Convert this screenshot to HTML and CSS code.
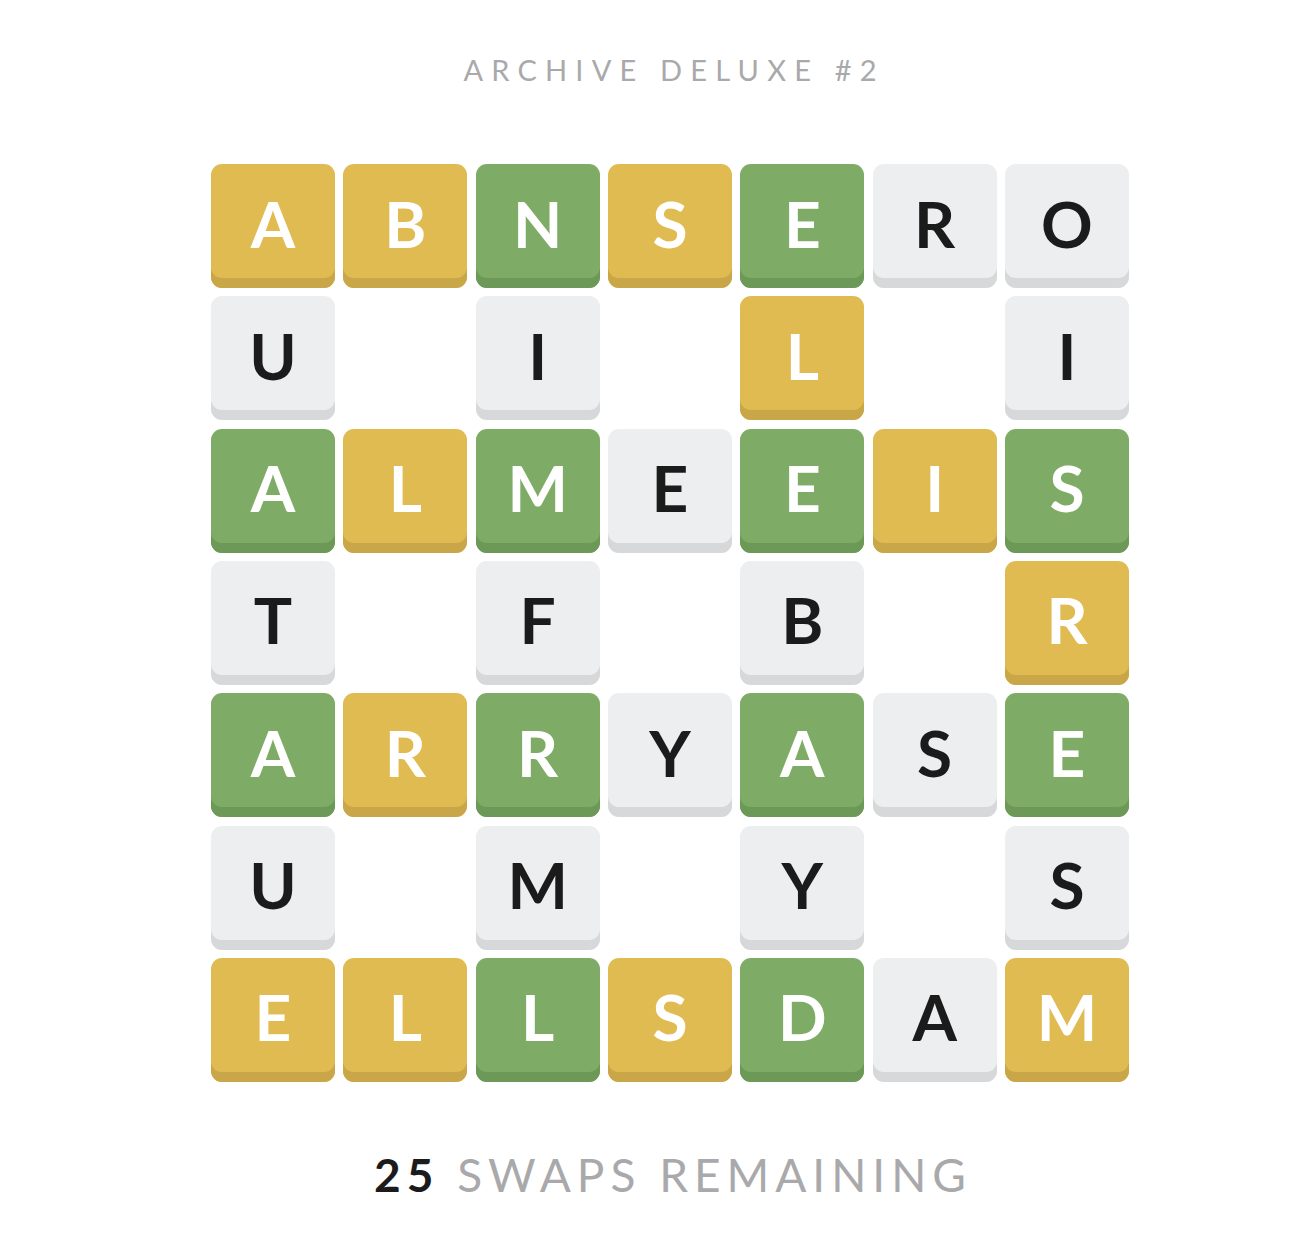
FILE: index.html
```html
<!DOCTYPE html>
<html>
<head>
<meta charset="utf-8">
<link rel="stylesheet" href="styles.css">
</head>
<body>
<main class="page">
  <h1 class="title">ARCHIVE DELUXE #2</h1>
  <div class="board">
    <div class="tile y">A</div><div class="tile y">B</div><div class="tile g">N</div><div class="tile y">S</div><div class="tile g">E</div><div class="tile w">R</div><div class="tile w">O</div>
    <div class="tile w">U</div><div class="gap"></div><div class="tile w">I</div><div class="gap"></div><div class="tile y">L</div><div class="gap"></div><div class="tile w">I</div>
    <div class="tile g">A</div><div class="tile y">L</div><div class="tile g">M</div><div class="tile w">E</div><div class="tile g">E</div><div class="tile y">I</div><div class="tile g">S</div>
    <div class="tile w">T</div><div class="gap"></div><div class="tile w">F</div><div class="gap"></div><div class="tile w">B</div><div class="gap"></div><div class="tile y">R</div>
    <div class="tile g">A</div><div class="tile y">R</div><div class="tile g">R</div><div class="tile w">Y</div><div class="tile g">A</div><div class="tile w">S</div><div class="tile g">E</div>
    <div class="tile w">U</div><div class="gap"></div><div class="tile w">M</div><div class="gap"></div><div class="tile w">Y</div><div class="gap"></div><div class="tile w">S</div>
    <div class="tile y">E</div><div class="tile y">L</div><div class="tile g">L</div><div class="tile y">S</div><div class="tile g">D</div><div class="tile w">A</div><div class="tile y">M</div>
  </div>
  <p class="swaps"><span class="count">25</span> SWAPS REMAINING</p>
</main>
</body>
</html>
```
FILE: styles.css
```css
html, body {
  margin: 0;
  padding: 0;
  background: #ffffff;
}
.page {
  display: flex;
  flex-direction: column;
  align-items: center;
  padding-left: 50px;
  font-family: "Lato", "Noto Sans", sans-serif;
}
.title {
  margin: 55px 0 0 0;
  font-family: "Lato", sans-serif;
  font-size: 29px;
  line-height: 30px;
  font-weight: 400;
  letter-spacing: 8.2px;
  padding-left: 8.2px;
  color: #a9a9ab;
}
.board {
  margin-top: 79px;
  width: 918px;
  height: 918px;
  display: grid;
  grid-template-columns: repeat(7, 124px);
  grid-template-rows: repeat(7, 124px);
  justify-content: space-between;
  align-content: space-between;
}
.tile {
  border-radius: 11px;
  display: flex;
  align-items: center;
  justify-content: center;
  font-size: 64px;
  font-weight: 700;
  padding-bottom: 6px;
  box-sizing: border-box;
}
.tile.y {
  background: #e0bb52;
  box-shadow: inset 0 -10px 0 #c9a749;
  color: #ffffff;
}
.tile.g {
  background: #7eac66;
  box-shadow: inset 0 -10px 0 #6d9958;
  color: #ffffff;
}
.tile.w {
  background: #edeef0;
  box-shadow: inset 0 -10px 0 #d7d8da;
  color: #1b1b1b;
}
.swaps {
  margin: 65px 0 0 0;
  font-size: 46px;
  line-height: 56px;
  letter-spacing: 6px;
  padding-left: 6px;
  color: #a9a9ab;
  font-weight: 400;
}
.count {
  color: #1b1b1b;
  font-weight: 700;
}
```
